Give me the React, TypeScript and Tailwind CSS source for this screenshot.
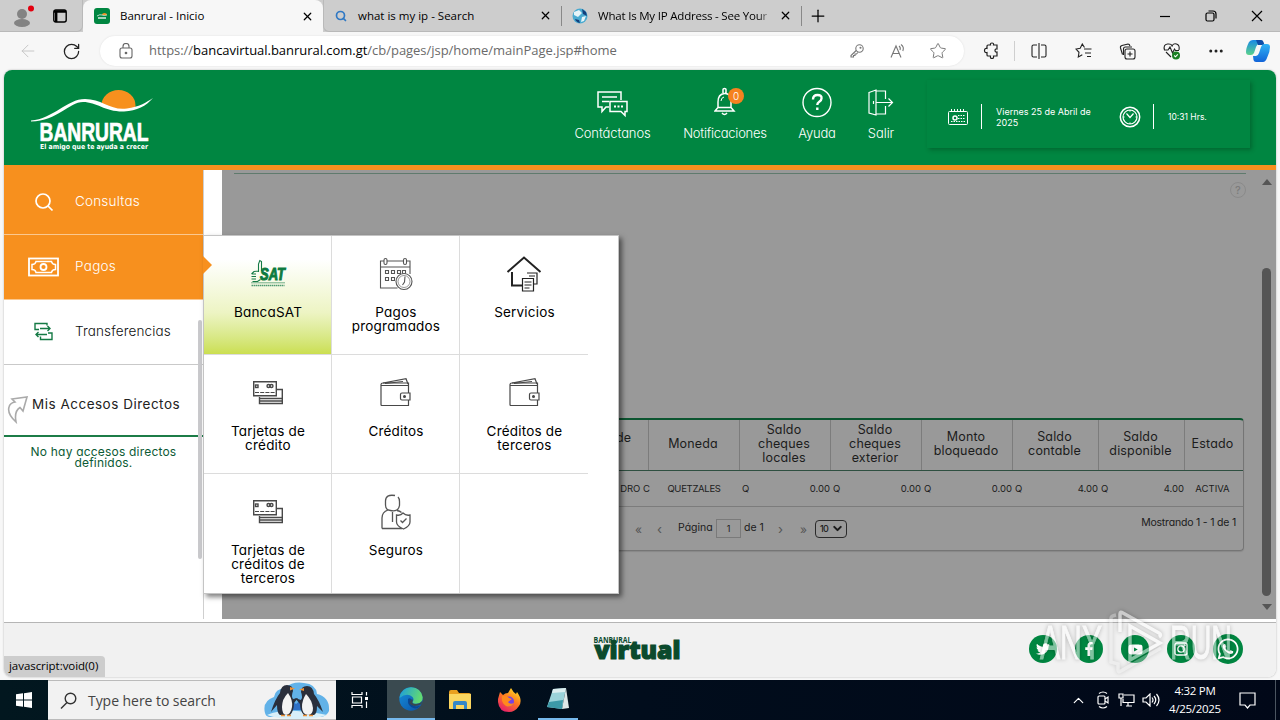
import type { ReactNode } from "react"
import {
  ArrowLeft,
  ChevronDown,
  ChevronUp,
  MoreHorizontal,
  Plus,
  RotateCw,
  Search,
  Star,
  X,
} from "lucide-react"
import { FaFacebookF, FaTwitter, FaWhatsapp, FaYoutube } from "react-icons/fa"

interface IconProps {
  w: number
  h: number
  className?: string
  sw?: number
  children: ReactNode
}

function Icon({ w, h, className = "", sw = 1, children }: IconProps) {
  return (
    <svg
      width={w}
      height={h}
      viewBox={`0 0 ${w} ${h}`}
      className={`shrink-0 ${className}`}
      fill="none"
      stroke="currentColor"
      strokeWidth={sw}
    >
      {children}
    </svg>
  )
}

/* ---------- Browser ---------- */

function TabBar() {
  return (
    <div className="flex h-8 shrink-0 bg-[#cdcdcd] text-[11.5px] text-black">
      <div className="flex w-[83px] items-center rounded-br-md border-r border-b border-[#b9b9b9]">
        <Icon w={24} h={26} className="ml-3" sw={0}>
          <circle cx="10" cy="11" r="5" fill="#838383" />
          <ellipse cx="10" cy="20" rx="8" ry="4" fill="#838383" />
          <circle cx="19" cy="5.500" r="3" fill="#e3000f" />
        </Icon>
        <Icon w={14} h={14} className="ml-[17px]" sw={1.4}>
          <rect x="0.8" y="1" width="12.4" height="12" rx="2" />
          <path d="M1 2.500h12M3.200 3v10" strokeWidth="2.400" />
        </Icon>
      </div>
      <div className="flex w-[240px] items-center rounded-t-lg bg-[#f7f7f7] pr-[9px] pl-[11px]">
        <Icon w={16} h={16} sw={1}>
          <rect width="16" height="16" rx="3" fill="#008641" stroke="none" />
          <path d="M8 7a2.500 2 0 0 1 5 0z" fill="#f7901e" stroke="none" />
          <path d="M3 8q3-2 5-1t5 0" stroke="#fff" strokeWidth="0.700" />
          <path d="M4 10h8" stroke="#fff" strokeWidth="1.300" />
        </Icon>
        <span className="ml-[10px] grow tracking-[-0.03px]">Banrural - Inicio</span>
        <X size={13} strokeWidth={2.200} />
      </div>
      <div className="flex w-[238px] items-center rounded-bl-md border-b border-l border-[#b9b9b9] pr-[9px] pl-[11px]">
        <Search size={12} strokeWidth={3.400} className="text-[#2f78c4]" />
        <span className="ml-[11px] grow">what is my ip - Search</span>
        <X size={13} strokeWidth={2.200} />
      </div>
      <div className="flex w-[241px] items-center border-b border-[#b9b9b9]">
        <div className="h-5 w-px bg-[#888]" />
        <Icon w={16} h={16} className="ml-[10px]" sw={0}>
          <circle cx="8" cy="8" r="7.500" fill="#4aaad0" />
          <path d="M2 4l5-2 3 3-4 4-4-2zM10 9l4-1-2 5-3 1z" fill="#e6f4f8" />
          <path d="M10 1l4 3 1 4-4-2zM3 11l4 1 1 3q-4-1-5-4z" fill="#123f7c" />
        </Icon>
        <span className="ml-[10px] w-[174px] bg-gradient-to-r from-black from-92% to-transparent bg-clip-text whitespace-nowrap tracking-[-0.2px] text-transparent">
          What Is My IP Address - See Your
        </span>
        <X size={13} strokeWidth={2.200} className="ml-[7px] shrink-0" />
        <div className="ml-auto h-5 w-px bg-[#888]" />
      </div>
      <div className="flex grow items-center border-b border-[#b9b9b9] pr-[17px] pl-[6px]">
        <Plus size={20} strokeWidth={1.500} />
        <Icon w={12} h={12} className="ml-auto" sw={1.200}>
          <path d="M1 6.500h10" />
        </Icon>
        <Icon w={12} h={12} className="ml-[34px]" sw={1.200}>
          <rect x="1" y="3" width="8" height="8" rx="1.500" />
          <path d="M3.500 1h4.500q3 0 3 3v4.500" />
        </Icon>
        <Icon w={12} h={12} className="ml-[34px]" sw={1.200}>
          <path d="M1 1l10 10M11 1L1 11" />
        </Icon>
      </div>
    </div>
  )
}

function Toolbar() {
  return (
    <div className="flex h-[38px] shrink-0 items-center bg-[#f7f7f7] text-[#222]">
      <ArrowLeft size={20} strokeWidth={1.100} className="ml-[18px] text-[#c3c3c3]" />
      <RotateCw size={19} strokeWidth={1.600} className="ml-[24px]" />
      <div className="ml-[19px] flex h-[30px] w-[864px] items-center rounded-full bg-white pr-[17px] pl-[19px] shadow-[0_0_2px_#ddd]">
        <Icon w={14} h={16} className="text-[#666]" sw={1.100}>
          <rect x="1" y="5" width="12" height="10" rx="2" />
          <path d="M4 5V3.500a3 3 0 0 1 6 0V5" />
          <circle cx="7" cy="10" r="0.800" fill="currentColor" />
        </Icon>
        <span className="ml-4 grow text-[13px] tracking-[-0.03px] whitespace-nowrap text-[#6a6a6a]">
          https://<span className="text-black">bancavirtual.banrural.com.gt</span>
          /cb/pages/jsp/home/mainPage.jsp#home
        </span>
        <Icon w={14} h={14} className="text-[#777]" sw={1.100}>
          <circle cx="9.500" cy="4.500" r="3.700" />
          <path d="M6.200 6.500L1 11.500V13h2.500v-1.500H5V10h1.500l1.300-1.500" />
          <circle cx="10.500" cy="3.700" r="0.500" />
        </Icon>
        <Icon w={16} h={16} className="ml-[26px] text-[#777]" sw={1.100}>
          <path d="M1 14.500L6 3l5 11.500M2.800 10.500h6.400M9 3q2 1.500 1 4M11 1.500q3.500 2.500 1.800 6.500" />
        </Icon>
        <Star size={18} strokeWidth={1.300} className="ml-[23px] text-[#777]" />
      </div>
      <Icon w={17} h={18} className="ml-[19px]" sw={1.200}>
        <path d="M5 3h2.500q-.5-2 1.500-2t1.500 2H14v4q-2-.3-2 1.500t2 1.500V14h-3.500q.5 2.500-1.500 2.500T7.500 14H5q-1 0-1-1v-2.500q-2.500.5-2.500-2T4 6.500V4q0-1 1-1z" />
      </Icon>
      <div className="ml-[14px] h-5 w-px bg-[#cfcfcf]" />
      <Icon w={16} h={16} className="ml-[16px]" sw={1.100}>
        <path d="M6 2H2.500q-1.500 0-1.500 1.500v9q0 1.500 1.500 1.500H6M8 0v16M10 2h3.500q1.500 0 1.500 1.500v9q0 1.500-1.500 1.500H10" />
      </Icon>
      <Icon w={17} h={16} className="ml-[28px]" sw={1.100}>
        <path d="M9.500 4.500L7.300 1 5.200 5.200 1 6l3 3.300L3.300 14l4-2.200M9 6h7.500M10 10h6M12 13.500h4" />
      </Icon>
      <Icon w={17} h={17} className="ml-[27px]" sw={1.100}>
        <path d="M3.500 11.500L1.500 5q-.5-2 1.500-2.500L9 1q1.500 0 2 2M4.500 12V6q0-2 2-2H13" />
        <rect x="6" y="6" width="10" height="10" rx="2" />
        <path d="M11 8.500v5M8.500 11h5" />
      </Icon>
      <Icon w={18} h={18} className="ml-[27px]" sw={1.100}>
        <path d="M1.500 8Q0 2.500 4.500 2T9 4.500Q10 1 13.500 2T16 8M1 8h4l2-3 2.500 6 2-4 1 1.500H16M3 10l5 5" />
        <circle cx="13" cy="13.500" r="4" fill="#1b7f24" stroke="none" />
        <path d="M11.200 13.500l1.300 1.300 2.300-2.500" stroke="#fff" />
      </Icon>
      <MoreHorizontal size={18} strokeWidth={2} className="ml-[26px]" />
      <Icon w={26} h={24} className="ml-[20px]" sw={0}>
        <defs>
          <linearGradient id="cpA" x1="0" y1="0" x2="0" y2="1">
            <stop offset="0" stopColor="#1789e6" />
            <stop offset="1" stopColor="#5bd28b" />
          </linearGradient>
          <linearGradient id="cpB" x1="0" y1="0" x2="0" y2="1">
            <stop offset="0" stopColor="#2fb3f5" />
            <stop offset="1" stopColor="#1264d8" />
          </linearGradient>
        </defs>
        <path d="M8 1h7q2 0 2.500 2l.5 2h-4q-2 0-3 3l-2 6q-1 2-3 2H4q-3 0-3-3 0-4 3-10 1.500-2 4-2z" fill="url(#cpA)" />
        <path d="M11 1h5q2 0 2.500 2l1 3h-6.500z" fill="#0d4da8" />
        <path d="M18 23h-7q-2 0-2.500-2L8 17h3q2 0 3-3l2-6q1-3 3-3h3q3 0 3 3 0 5-3 11-1.500 4-4 4z" fill="url(#cpB)" />
      </Icon>
    </div>
  )
}

/* ---------- Bank header ---------- */

function BankLogo() {
  return (
    <svg width="124" height="66" viewBox="0 0 124 66" className="mt-[18px] ml-[27px] shrink-0 overflow-visible">
      <path d="M70.500 17.500a17 15.500 0 0 1 34 0q0 2-1 4-14 3-27-2z" fill="#f7901e" />
      <path
        d="M0 32.500C22 31 36 11 54 11c17 0 26 12 42 9.500 12-1.500 19-6 26-10.500-7 8-16 13-29 13.500C74 24 66 14 52 14 38 14 27 33 0 33.500z"
        fill="#fff"
      />
      <text
        x="8.500"
        y="53"
        textLength="109"
        lengthAdjust="spacingAndGlyphs"
        fill="#fff"
        stroke="#fff"
        strokeWidth="0.700"
        className="font-['Liberation_Sans'] text-[25px] font-bold"
      >
        BANRURAL
      </text>
      <text
        x="9"
        y="61"
        textLength="108"
        lengthAdjust="spacingAndGlyphs"
        fill="#fff"
        className="font-['DejaVu_Sans'] text-[7px] font-bold"
      >
        El amigo que te ayuda a crecer
      </text>
    </svg>
  )
}

function BankHeader() {
  return (
    <header className="flex h-[100px] shrink-0 border-b-[5px] border-[#f7901e] bg-[#008641] text-[13px] text-white">
      <BankLogo />
      <nav className="ml-auto flex pt-[17px] leading-4 font-light">
        <a className="flex w-[77px] flex-col items-center gap-[6px]">
          <Icon w={31} h={32} sw={1.500}>
            <path d="M12 20H9l-4 4.500V20H1V5h23v8M5 10h15M5 14.500h7" />
            <path d="M13 14.500h17v10h-2v4l-4-4H13z" />
            <path d="M17 19.500h2M20.500 19.500h2M24 19.500h2" strokeWidth="1.800" />
          </Icon>
          <span className="tracking-[-0.1px]">Contáctanos</span>
        </a>
        <a className="ml-[32px] flex w-[84px] flex-col items-center gap-[6px]">
          <div className="relative">
            <Icon w={22} h={32} sw={1.500}>
              <path d="M9 6V2.500q0-1 1.500-1t1.500 1V6M4 20.500V15q0-8 6.500-8.500T17 15v5.500l3 3.500H1zM4.500 20.500h12M8 26q2.500 3 5 0" />
              <path d="M7 14q.3-3.500 3-4" strokeWidth="1" />
            </Icon>
            <span className="absolute top-[1px] left-[14px] h-4 w-4 rounded-full bg-[#f58220] text-center text-[10px] leading-4">
              0
            </span>
          </div>
          <span className="tracking-[-0.25px]">Notificaciones</span>
        </a>
        <a className="ml-[31px] flex w-[38px] flex-col items-center gap-[6px]">
          <Icon w={30} h={32} sw={1.400}>
            <circle cx="15" cy="15.500" r="14" />
            <path d="M11 12.500q0-4.500 4.500-4.500t4 3.500q0 2-2.500 3.500-1.700 1-1.700 3M15.300 20.500v2.500" strokeWidth="2.400" />
          </Icon>
          <span className="tracking-[-0.2px]">Ayuda</span>
        </a>
        <a className="ml-[31px] flex w-[28px] flex-col items-center gap-[6px]">
          <Icon w={26} h={32} sw={1.200}>
            <path d="M8 4h9.500v8M17.500 19v8H8M1 5.500l7-2.500v25l-7-2zM5.500 14v3M8 15.500h16M20.500 11.500l4 4-4 4" />
          </Icon>
          <span className="tracking-[-0.1px]">Salir</span>
        </a>
      </nav>
      <div className="mt-[10px] mr-[26px] ml-[32px] flex h-[68px] w-[323px] items-center bg-[#008641] pt-[5px] text-[9px] leading-[11px] shadow-[2px_2px_4px_rgba(0,50,20,0.35)]">
        <Icon w={20} h={16} className="ml-[21px]" sw={1}>
          <rect x="0.500" y="2.500" width="19" height="13" rx="1" />
          <path d="M3.500 0v3M6.500 0v3M9.500 0v3M12.500 0v3M15.500 0v3" />
          <path d="M10 6.500h7.500M10 9.500h7.500M3 12.500h14" strokeDasharray="1.500 1" />
          <circle cx="7" cy="9" r="2" strokeWidth="1.500" />
        </Icon>
        <div className="ml-[13px] h-[25px] w-px bg-white" />
        <span className="ml-[14px] w-[104px] pt-px">Viernes 25 de Abril de 2025</span>
        <Icon w={22} h={22} className="ml-[19px]" sw={1.500}>
          <circle cx="11" cy="11" r="9.700" />
          <circle cx="11" cy="11" r="7" strokeWidth="1.200" />
          <path d="M7.500 7.500l3.500 4 3.500-4M11 4v1.500M11 16.500V18M4 11h1.500M16.500 11H18" strokeWidth="1.200" />
        </Icon>
        <div className="ml-[12px] h-[25px] w-px bg-white" />
        <span className="ml-[14px] pt-[2px] text-[8.5px]">10:31 Hrs.</span>
      </div>
    </header>
  )
}

/* ---------- Sidebar ---------- */

function Sidebar() {
  return (
    <aside className="flex w-[218px] shrink-0 bg-white text-[13.5px]">
      <div className="w-[200px] border-r border-[#cfcfcf]">
        <div className="flex h-[65px] items-center border-b border-[#fbc88f] bg-[#f7901e] font-light text-white">
          <Icon w={20} h={20} className="ml-[30px]" sw={1.700}>
            <circle cx="9" cy="9" r="7" />
            <path d="M14 14l4.500 4.500" />
          </Icon>
          <span className="mb-[2px] ml-[21px] tracking-[0.2px]">Consultas</span>
        </div>
        <div className="flex h-[65px] items-center border-b border-[#fbc88f] bg-[#f7901e] font-light text-white">
          <Icon w={32} h={20} className="ml-[24px]" sw={1.800}>
            <rect x="1" y="1.500" width="29" height="17" />
            <path d="M8 4.500h15.500q.5 3 4 3v5q-3.500 0-4 3H8q-.5-3-4-3v-5q3.500 0 4-3z" strokeWidth="1.500" />
            <circle cx="15.500" cy="10" r="3" />
          </Icon>
          <span className="mb-px ml-[15px] tracking-[0.3px]">Pagos</span>
        </div>
        <div className="flex h-[65px] items-center border-b border-[#c9c9c9] font-light text-[#111]">
          <Icon w={20} h={20} className="ml-[30px] text-[#157a45]" sw={1.400}>
            <path d="M5 7.500H1v-6h12v2M6 6.500h10M13.500 4L16 6.500 13.500 9M14 11h4v6.500H6.500v-3M13 12.500H2M4.500 10L2 12.500 4.500 15" />
          </Icon>
          <span className="mb-[2px] ml-[21px] tracking-[0.15px]">Transferencias</span>
        </div>
        <div className="flex h-[72px] items-center border-b-2 border-[#1c7c47] pt-[8px] text-[13.5px] text-[#222]">
          <Icon w={22} h={28} className="mt-[12px] ml-[3px] text-[#aaa]" sw={1.600}>
            <path d="M5 3l15-2-4 14-3-3.500Q7 15 9 26 0 18 2 11q1-4 6-5z" />
          </Icon>
          <span className="ml-[3px] tracking-[0.5px]">Mis Accesos Directos</span>
        </div>
        <p className="pt-[9px] text-center text-[12px] leading-[11px] tracking-[0.2px] text-[#0c5a35]">
          No hay accesos directos
          <br />
          definidos.
        </p>
      </div>
    </aside>
  )
}

/* ---------- Account table ---------- */

const columns = [
  { title: "Moneda", width: "w-[91px]" },
  { title: "Saldo cheques locales", width: "w-[91px]" },
  { title: "Saldo cheques exterior", width: "w-[91px]" },
  { title: "Monto bloqueado", width: "w-[91px]" },
  { title: "Saldo contable", width: "w-[86px]" },
  { title: "Saldo disponible", width: "w-[86px]" },
  { title: "Estado", width: "w-[57px]" },
]

const amounts = [
  { value: "0.00", width: "w-[91px]" },
  { value: "0.00", width: "w-[91px]" },
  { value: "0.00", width: "w-[91px]" },
  { value: "4.00", width: "w-[86px]" },
  { value: "4.00", width: "w-[86px]" },
]

function AccountTable() {
  return (
    <div className="mt-[244px] ml-[14px] h-[133px] w-[1008px] rounded-sm border border-t-2 border-[#757575] border-t-[#0c5530] text-[#1c1c1c] shadow-[0_1px_1px_#888]">
      <div className="flex h-[51px] border-b border-[#2e4f40] text-center text-[12.5px] leading-[14px]">
        <div className="flex w-[412px] items-center justify-end border-r border-[#7c7c7c] pr-[17px] pb-[15px]">de</div>
        {columns.map((column, i) => (
          <div
            key={column.title}
            className={`flex shrink-0 items-center justify-center pr-[9px] pb-[3px] pl-[7px] tracking-[0.15px] ${column.width} ${
              i < columns.length - 1 ? "border-r border-[#7c7c7c]" : ""
            }`}
          >
            {column.title}
          </div>
        ))}
      </div>
      <div className="flex h-[36px] items-center border-b border-[#7c7c7c] pt-px text-[9.5px]">
        <div className="w-[413px] shrink-0 text-right whitespace-nowrap">DRO C</div>
        <div className="w-[90px] shrink-0 pr-[2px] text-center tracking-[-0.3px]">QUETZALES</div>
        {amounts.map((amount, i) => (
          <div key={i} className={`flex shrink-0 justify-between pr-[1px] pl-[2px] ${amount.width}`}>
            <span>Q</span>
            <span>{amount.value}</span>
          </div>
        ))}
        <div className="w-[57px] pr-[2px] text-center">ACTIVA</div>
      </div>
      <div className="flex h-[43px] items-center pl-[398px] text-[10.5px]">
        <span className="mt-[3px] w-[22px] text-[12px] text-[#555]">«</span>
        <span className="mt-[3px] w-[21px] text-[13px] text-[#555]">‹</span>
        <span className="mb-[1px] w-[38px]">Página</span>
        <span className="flex h-[19px] w-[25px] items-center justify-center border border-[#7a7a7a] text-[9px]">1</span>
        <span className="mb-[1px] ml-[3px] w-[34px]">de 1</span>
        <span className="mt-[3px] w-[22px] text-[13px] text-[#555]">›</span>
        <span className="mt-[3px] w-[15px] text-[12px] text-[#555]">»</span>
        <span className="flex h-[18px] w-[32px] items-center justify-between rounded-sm border border-[#2a2a2a] pr-[2px] pl-[4px] text-[9px] font-medium tracking-[-0.8px]">
          10
          <ChevronDown size={13} strokeWidth={3.800} />
        </span>
        <span className="mr-[7px] mb-[12px] ml-auto tracking-[-0.2px]">Mostrando 1 - 1 de 1</span>
      </div>
    </div>
  )
}

function MainPanel() {
  return (
    <main className="flex grow bg-[#999999]">
      <div className="relative w-[1035px] pt-[3px]">
        <div className="ml-[12px] h-px w-[1012px] bg-[#5f7a6d]" />
        <AccountTable />
        <span className="absolute top-[12px] left-[1008px] h-4 w-4 rounded-full border border-[#8a8a8a] text-center text-[11px] leading-[14px] font-medium text-[#7c7c7c]">
          ?
        </span>
      </div>
      <div className="ml-auto flex w-[18px] flex-col items-center pt-[9px] pr-px pb-[9px]">
        <Icon w={10} h={6} sw={0}>
          <path d="M0 6l5-6 5 6z" fill="#555" />
        </Icon>
        <div className="mt-[83px] h-[328px] w-[9px] rounded-full bg-[#555]" />
        <Icon w={10} h={6} className="mt-auto" sw={0}>
          <path d="M0 0l5 6 5-6z" fill="#555" />
        </Icon>
      </div>
    </main>
  )
}

/* ---------- Pagos submenu ---------- */

function SatIcon() {
  return (
    <svg width="36" height="30" viewBox="0 0 36 30" className="overflow-visible">
      <path
        d="M8.500 13V5l1.300-3.500 1.700 1V12M8.500 12L4 12.500 1.500 15M6 15H2M6 17.500H1.500M6 20H1.500M2.500 22.500h5l3-2"
        fill="none"
        stroke="#147a45"
        strokeWidth="1.100"
      />
      <text
        x="10"
        y="20.500"
        textLength="25"
        lengthAdjust="spacingAndGlyphs"
        fill="#0d7a40"
        stroke="#0d7a40"
        strokeWidth="1"
        className="font-['Liberation_Sans'] text-[16px] font-bold italic"
      >
        SAT
      </text>
      <path d="M1 23.800h34" stroke="#4f9a70" strokeWidth="0.800" />
      <path d="M1.500 26.500h33" stroke="#4f9a70" strokeWidth="1.500" strokeDasharray="1.500 0.500" />
    </svg>
  )
}

function CalendarIcon() {
  return (
    <Icon w={34} h={34} className="text-[#555]" sw={1.100}>
      <path d="M5 4H1.500v27h17M8 4h16M27 4h4v13M1.500 10h29.500" />
      <rect x="5" y="1.500" width="3" height="6" rx="1.500" />
      <rect x="24.500" y="1.500" width="3" height="6" rx="1.500" />
      <path d="M6.500 13.500h3v3h-3zM12.500 13.500h3v3h-3zM18.500 13.500h3v3h-3zM23.500 13.500h3v3h-3zM6.500 20.500h3v3h-3zM12.500 20.500h3v3h-3z" />
      <circle cx="25" cy="24.500" r="8" fill="#fff" />
      <circle cx="25" cy="24.500" r="6" strokeWidth="0.600" />
      <path d="M26 19.500l-.5 5.500-2 3" />
    </Icon>
  )
}

function HouseIcon() {
  return (
    <Icon w={36} h={36} className="text-[#222]" sw={2}>
      <path d="M1.500 16L18 1.500 34.500 16" />
      <path d="M6 16v13.500h11" />
      <path d="M21 17h10v11h-6" strokeWidth="1.200" />
      <path d="M23 20h6" strokeWidth="1" />
      <path d="M16.500 22.500h11V35h-11z" fill="#fff" strokeWidth="1.200" />
      <path d="M18.500 26h7M18.500 29h7M18.500 32h5" strokeWidth="1" />
    </Icon>
  )
}

function CardsIcon() {
  return (
    <Icon w={30} h={24} className="text-[#484848]" sw={1.400}>
      <path d="M24 8.500h5.300v14H6.500V16" />
      <path d="M6.500 17.500h22.500M6.500 20h22.500" strokeWidth="1.600" />
      <path d="M0.700 0.700h22.600v14H0.700z" />
      <path d="M2 11.500h20" strokeDasharray="4 1.200" strokeWidth="1" />
      <rect x="2.500" y="4" width="2.500" height="2.500" />
      <circle cx="15.500" cy="5" r="1.500" />
      <circle cx="18.500" cy="5" r="1.500" />
    </Icon>
  )
}

function WalletIcon() {
  return (
    <Icon w={31} h={29} className="text-[#484848]" sw={1.200}>
      <path d="M3 5l23-4.300L28 6M5 5.500l18-2" />
      <path d="M1 6.500q0-1.500 2-1.500h25.500v22.500H2q-1 0-1-1zM1 7.500h27.500" />
      <path d="M22 15h8v7h-8q-1.500 0-1.500-1.500v-4q0-1.500 1.500-1.500z" fill="#fff" />
      <circle cx="24.500" cy="18.500" r="0.900" fill="currentColor" />
    </Icon>
  )
}

function InsuranceIcon() {
  return (
    <Icon w={30} h={36} className="text-[#555]" sw={1.300}>
      <path d="M14 1.500Q4.500 0 4.500 7v4q0 5 5 5.500 8 1.500 9-5V7.500q0-3-1.500-4.500M1 34.500V24q0-6 6-8M1 34.500h20M11.500 18v10M16 16.500q3 .5 4.500 2" />
      <path d="M22 19q3 3 7 2v7q0 4-6.500 7Q15.500 32 15.500 28v-7q4 1 6.500-2z" fill="#fff" />
      <path d="M19.500 26.500l2 2 4-4" />
    </Icon>
  )
}

interface MenuEntry {
  label: string
  icon: ReactNode
}

const menuEntries: MenuEntry[] = [
  { label: "BancaSAT", icon: <SatIcon /> },
  { label: "Pagos programados", icon: <CalendarIcon /> },
  { label: "Servicios", icon: <HouseIcon /> },
  { label: "Tarjetas de crédito", icon: <CardsIcon /> },
  { label: "Créditos", icon: <WalletIcon /> },
  { label: "Créditos de terceros", icon: <WalletIcon /> },
  { label: "Tarjetas de créditos de terceros", icon: <CardsIcon /> },
  { label: "Seguros", icon: <InsuranceIcon /> },
  { label: "", icon: null },
]

function PagosMenu() {
  return (
    <div className="absolute top-[165px] left-[199px] h-[359px] w-[416px] border border-[#c4c4c4] bg-white shadow-[3px_3px_5px_rgba(0,0,0,0.5)]">
      <div className="grid w-[384px] grid-cols-3 grid-rows-[119px_119px_119px]">
        {menuEntries.map((entry, i) => (
          <div
            key={i}
            className={`flex flex-col items-center border-[#dcdcdc] ${i % 3 < 2 ? "border-r" : ""} ${
              i < 6 ? "border-b" : ""
            } ${i === 0 ? "bg-gradient-to-b from-white from-20% via-[#edf4c3] via-65% to-[#cbdf50]" : ""}`}
          >
            <div className="flex h-[69px] items-center justify-center pt-[6px]">{entry.icon}</div>
            <span className="w-[104px] pl-px text-center text-[13.5px] leading-[14px] tracking-[0.2px] text-black">
              {entry.label}
            </span>
          </div>
        ))}
      </div>
      <Icon w={9} h={18} className="absolute top-[20px] -left-px" sw={0}>
        <path d="M0 0l9 9-9 9z" fill="#f7901e" />
      </Icon>
    </div>
  )
}

/* ---------- Footer ---------- */

function BankFooter() {
  return (
    <footer className="mt-[3px] flex h-[55px] items-start rounded-b-lg border-t border-[#b5b5b5] bg-[#f1f1f1]">
      <svg width="90" height="26" viewBox="0 0 90 26" className="mt-[13px] ml-[589px] overflow-visible">
        <text
          x="0.500"
          y="6.500"
          textLength="38"
          lengthAdjust="spacingAndGlyphs"
          fill="#0b4a2d"
          className="font-['Open_Sans'] text-[8px] font-bold"
        >
          BANRURAL
        </text>
        <text
          x="1.500"
          y="22.500"
          textLength="86"
          lengthAdjust="spacingAndGlyphs"
          fill="#0b4a2d"
          stroke="#0b4a2d"
          strokeWidth="1.200"
          className="font-['Open_Sans'] text-[24px] font-extrabold"
        >
          virtual
        </text>
      </svg>
      <div className="mt-[11px] mr-[33px] ml-auto flex items-center gap-[18px] text-white">
        <span className="flex h-[28px] w-[28px] items-center justify-center rounded-full bg-[#008641]">
          <FaTwitter size={14} />
        </span>
        <span className="flex h-[28px] w-[28px] items-center justify-center rounded-full bg-[#008641]">
          <FaFacebookF size={14} />
        </span>
        <span className="flex h-[28px] w-[28px] items-center justify-center rounded-full bg-[#008641]">
          <FaYoutube size={15} />
        </span>
        <span className="flex h-[28px] w-[28px] items-center justify-center rounded-full bg-[#008641]">
          <Icon w={14} h={14} sw={1.300}>
            <rect x="1" y="1" width="12" height="12" rx="2" />
            <circle cx="7" cy="7" r="3.200" />
            <circle cx="10.800" cy="3.200" r="0.400" />
          </Icon>
        </span>
        <span className="flex h-[30px] w-[30px] items-center justify-center rounded-full bg-[#008641]">
          <FaWhatsapp size={24} />
        </span>
      </div>
    </footer>
  )
}

function Watermark() {
  return (
    <svg
      width="200"
      height="68"
      viewBox="0 0 200 68"
      className="absolute top-[538px] left-[1032px] overflow-visible opacity-50 drop-shadow-[0_0_2px_rgba(0,0,0,0.5)]"
      fill="none"
      stroke="#fff"
    >
      <text
        x="4"
        y="51"
        textLength="62"
        lengthAdjust="spacingAndGlyphs"
        className="font-['Liberation_Sans'] text-[48px]"
        fill="#fff"
      >
        ANY
      </text>
      <text
        x="134"
        y="51"
        textLength="62"
        lengthAdjust="spacingAndGlyphs"
        className="font-['Liberation_Sans'] text-[48px]"
        fill="#fff"
      >
        RUN
      </text>
      <path d="M84 6q0-3 3-1l36 20q3 2 0 4M84 6v18M94 18l30 17-30 17zM94 52V18" strokeWidth="3.500" />
      <path d="M75 10q0-2 5-3M75 10v44l7 2v6q0 3 3 1l40-23" strokeWidth="3.500" strokeOpacity="0.600" />
    </svg>
  )
}

/* ---------- Taskbar ---------- */

function Penguins() {
  return (
    <svg width="68" height="38" viewBox="0 0 68 38">
      <path d="M2 32Q-1 20 11 16 12 8 22 7q8-7 19-5 12 1 13 11 13 3 12 17-2 5-8 6H7q-4 0-5-4z" fill="#62b2e8" />
      <path d="M4 34q12-5 30-4t30 4q-10 4-30 4T4 34z" fill="#d8eff9" />
      <path d="M27 18l6 5 6-5v11H27z" fill="#2f6fc5" />
      <path d="M24 4q-6 0-7 8-5 6-9 19l6-7q0 8 3 10h10q4-4 4-12l4-5-5 1q-2-3 0-8 0-6-6-6z" fill="#2a2f3c" />
      <path d="M25 12q-6 6-6 14 0 7 4 8 5-1 6-8t-4-14z" fill="#f3f3f3" />
      <path d="M44 5q6 0 7 8 5 6 9 18l-6-6q0 8-3 9H41q-4-4-4-11l-5-6 6 2q2-3 0-8 0-6 6-6z" fill="#2a2f3c" />
      <path d="M43 13q6 6 7 14 0 7-5 7-6-1-6-8t4-13z" fill="#f3f3f3" />
      <path d="M27 6l5 1.500-5 2zM41 7l-5 1.500 5 1.500z" fill="#ed9136" />
      <path d="M18 34.500h4M24 34.500h4M40 34.500h4M46 34.500h4" stroke="#ed9136" strokeWidth="1.500" />
    </svg>
  )
}

function EdgeIcon() {
  return (
    <svg width="24" height="24" viewBox="0 0 24 24">
      <defs>
        <linearGradient id="edgeTop" x1="0" y1="0" x2="1" y2="0.300">
          <stop offset="0" stopColor="#1a9be0" />
          <stop offset="1" stopColor="#62da72" />
        </linearGradient>
        <linearGradient id="edgeLow" x1="0" y1="0" x2="1" y2="1">
          <stop offset="0" stopColor="#1590dc" />
          <stop offset="1" stopColor="#0c50a4" />
        </linearGradient>
      </defs>
      <circle cx="12" cy="12" r="11.700" fill="url(#edgeLow)" />
      <path d="M0.500 11Q2 1 12 .3q10 .5 11.700 10 .3 6-6.700 6.500-4 0-3.500-2 2-2 0-4.800Q8 5 .5 11z" fill="url(#edgeTop)" />
      <path d="M9 12q-1 8 7 9.500 3 0 5-2.500-9 2-8-5-1-4-4-2z" fill="#0a4794" />
      <path d="M13.500 14.500q-1 2.500 3.500 2.500 4 0 6-3l-.5 3q-8 4-12-.5 0-3 2.500-4.500 1.500 1 .5 2.500z" fill="#37474f" />
    </svg>
  )
}

function Taskbar() {
  return (
    <div className="flex h-10 shrink-0 bg-gradient-to-r from-[#02171f] via-[#010d1c] to-[#010818] text-white">
      <div className="flex w-12 items-center justify-center">
        <Icon w={16} h={16} sw={0}>
          <path d="M0 2.300l7-1v6.200H0zM8 1.200L16 0v7.500H8zM0 8.500h7v6.200l-7-1zM8 8.500h8V16l-8-1.200z" fill="#fff" />
        </Icon>
      </div>
      <div className="flex w-[288px] items-center border-y border-[#bbb] bg-[#f2f2f2] pl-[12px] text-[#333]">
        <Icon w={17} h={17} sw={1.400}>
          <circle cx="10.500" cy="6.500" r="5.300" />
          <path d="M7 10.500L1 16.500" />
        </Icon>
        <span className="ml-[11px] grow text-[14px] tracking-[-0.05px] text-[#444]">Type here to search</span>
        <Penguins />
        <div className="w-[5px]" />
      </div>
      <div className="flex w-[51px] items-center justify-center pr-[3px]">
        <Icon w={18} h={16} sw={1.200}>
          <path d="M1 0v2.500h10V0M1.500 5h9v6h-9zM1 16v-2.500h10V16M15.500 0v3.500M15.500 9.500V16" />
          <path d="M14 5h3v3h-3z" fill="#fff" stroke="none" />
        </Icon>
      </div>
      <div className="flex w-12 items-center justify-center border-b-2 border-[#76b9ed] bg-[#3a4a50]">
        <EdgeIcon />
      </div>
      <div className="flex w-[49px] items-center justify-center">
        <Icon w={22} h={20} sw={0}>
          <path d="M0 2q0-2 2-2h6l2 3h10q2 0 2 2v13q0 1-1 1H1q-1 0-1-1z" fill="#e9a01f" />
          <path d="M0 4h22v14q0 1-1 1H1q-1 0-1-1z" fill="#fbd660" />
          <path d="M4 19v-6q0-2 2-2h10q2 0 2 2v6h-3v-4H7v4z" fill="#3588c9" />
        </Icon>
      </div>
      <div className="flex w-[49px] items-center justify-center">
        <Icon w={24} h={24} sw={0}>
          <defs>
            <linearGradient id="fox" x1="0.800" y1="0" x2="0.200" y2="1">
              <stop offset="0" stopColor="#ffe226" />
              <stop offset="0.450" stopColor="#ff7a1f" />
              <stop offset="1" stopColor="#e5186f" />
            </linearGradient>
          </defs>
          <path d="M1 11l2-7 3 3q2-2 5-2l3-5q2 4 5 6l1-2q6 8 2 14-4 6-10 6Q2 24 1 14z" fill="url(#fox)" />
          <circle cx="12" cy="13.500" r="5" fill="#7542e5" />
          <path d="M5 8q5-1 7 2l3 1-4 3q2 3 6 1-3 5-8 3-5-3-4-10z" fill="#ff8a1d" />
        </Icon>
      </div>
      <div className="ml-[5px] flex w-[40px] items-center justify-center border-b-2 border-[#76b9ed]">
        <Icon w={24} h={22} sw={0}>
          <path d="M7 1l13-1-4 21L1 19z" fill="#9bd3da" />
          <path d="M7 1l13-1-1 4-13 1z" fill="#dceef0" />
          <path d="M20 0l3 20-7 1z" fill="#dfe8e8" />
          <path d="M3 14l14-2-1 9-15-2z" fill="#3c99a8" />
        </Icon>
      </div>
      <div className="ml-auto flex items-center">
        <ChevronUp size={17} strokeWidth={1.700} />
        <Icon w={12} h={18} className="ml-[10px]" sw={1.200}>
          <path d="M2 2.500q4-3 8 0M2 15.500q4 3 8 0" />
          <rect x="1" y="5" width="7" height="8" rx="1" />
          <path d="M8 8l3-2v6l-3-2" />
        </Icon>
        <Icon w={17} h={14} className="ml-[9px]" sw={1.200}>
          <path d="M6 2h10v7.500H5V6M8 13h6M10 9.500V13M1 1h4v4H1zM3 5v8" />
        </Icon>
        <Icon w={18} h={14} className="ml-[7px]" sw={1.200}>
          <path d="M1 5h3l4-4v12l-4-4H1zM10 4.500q2 2.500 0 5M12 3q3.500 4 0 8M14.500 1q5 6 0 12" />
        </Icon>
        <div className="ml-[7px] w-[56px] text-center text-[11.5px] leading-[18px] tracking-[-0.3px] whitespace-nowrap">
          <div>4:32 PM</div>
          <div>4/25/2025</div>
        </div>
        <Icon w={17} h={17} className="ml-[16px]" sw={1.200}>
          <path d="M1 1h15v12h-5l-2.500 3L6 13H1z" />
        </Icon>
        <div className="ml-[19px] h-10 w-px bg-[#4b5560]" />
        <div className="w-[4px]" />
      </div>
    </div>
  )
}

export default function App() {
  return (
    <div className="flex h-[720px] w-[1280px] flex-col overflow-hidden bg-[#f7f7f7] font-['Open_Sans',sans-serif]">
      <TabBar />
      <Toolbar />
      <div className="relative mx-1 flex h-[607px] shrink-0 flex-col overflow-hidden rounded-lg bg-white font-['Inter',sans-serif] shadow-[0_0_2px_#aaa] [font-feature-settings:'cv11']">
        <BankHeader />
        <div className="flex h-[449px] shrink-0">
          <Sidebar />
          <MainPanel />
        </div>
        <BankFooter />
        <div className="absolute top-[250px] left-[194px] h-[239px] w-[4px] rounded-full bg-[#c9c9cc]" />
        <PagosMenu />
        <Watermark />
        <div className="absolute bottom-0 left-0 h-[21px] w-[101px] rounded-tr bg-[#cdcdcd] pl-[5px] font-['Open_Sans',sans-serif] text-[11.5px] leading-[20px] tracking-[-0.05px] text-black">
          javascript:void(0)
        </div>
      </div>
      <div className="h-[3px] shrink-0" />
      <Taskbar />
    </div>
  )
}
